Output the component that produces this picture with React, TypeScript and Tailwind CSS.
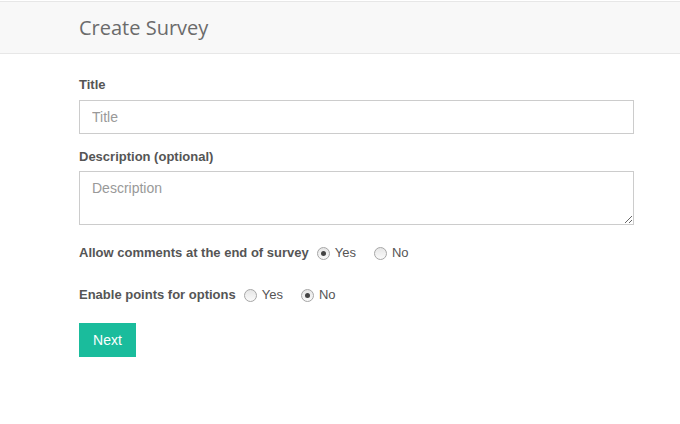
import React from 'react';

const Radio = ({ checked, label }: { checked?: boolean; label: string }) => (
  <span className="flex items-center mr-[18px]">
    <span className="w-[13px] h-[13px] rounded-full border border-[#a6a6a6] bg-gradient-to-b from-[#e6e6e6] to-[#fafafa] flex items-center justify-center">
      {checked && <span className="w-[5px] h-[5px] rounded-full bg-[#444]" />}
    </span>
    <span className="ml-[5px] font-normal">{label}</span>
  </span>
);

export default function App() {
  return (
    <div className="w-[680px] h-[424px] bg-white font-['Liberation_Sans',Arial,sans-serif] text-[13px] text-[#555]">
      <div className="mt-px h-[53px] bg-[#f8f8f8] border-t border-b border-[#e7e7e7] flex items-center pl-[79px]">
        <h1 className="font-['Open_Sans',sans-serif] text-[20px] text-[#6b6b6b] leading-none">Create Survey</h1>
      </div>
      <div className="pl-[79px] w-[634px]">
        <label className="block font-bold leading-[18px] mt-[22px] mb-[6px]">Title</label>
        <input
          type="text"
          placeholder="Title"
          className="block w-full h-[34px] border border-[#ccc] px-3 text-[14px] placeholder:text-[#999] outline-none"
        />
        <label className="block font-bold leading-[18px] mt-[14px] mb-[5px]">Description (optional)</label>
        <textarea
          placeholder="Description"
          className="block w-full h-[54px] border border-[#ccc] px-3 py-[6px] text-[14px] leading-[20px] placeholder:text-[#999] outline-none"
        />
        <div className="flex items-center leading-[18px] mt-[19px]">
          <span className="font-bold mr-2">Allow comments at the end of survey</span>
          <Radio checked label="Yes" />
          <Radio label="No" />
        </div>
        <div className="flex items-center leading-[18px] mt-[24px]">
          <span className="font-bold mr-2">Enable points for options</span>
          <Radio label="Yes" />
          <Radio checked label="No" />
        </div>
        <button className="mt-[19px] w-[57px] h-[34px] bg-[#1abc9c] text-white text-[14px]">Next</button>
      </div>
    </div>
  );
}
